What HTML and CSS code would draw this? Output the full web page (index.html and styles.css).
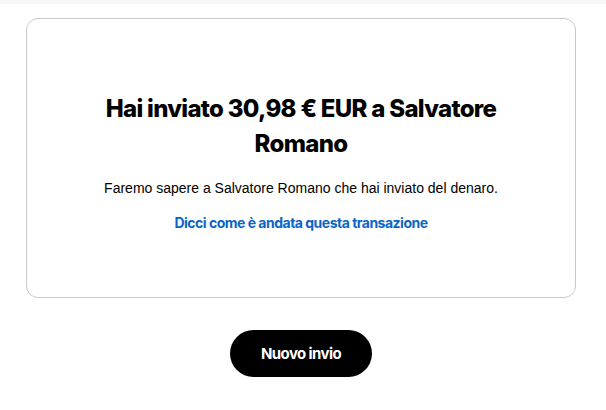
FILE: index.html
```html
<!DOCTYPE html>
<html lang="it">
<head>
  <meta charset="UTF-8" />
  <meta name="viewport" content="width=device-width, initial-scale=1" />
  <title>Invio completato</title>
  <link rel="stylesheet" href="styles.css">
</head>
<body>
  <div class="topbar"></div>

  <main class="page">
    <section class="card">
      <h1 class="title">Hai inviato 30,98&nbsp;€ EUR a Salvatore Romano</h1>
      <p class="note">Faremo sapere a Salvatore Romano che hai inviato del denaro.</p>
      <a class="feedback" href="#">Dicci come è andata questa transazione</a>
    </section>

    <div class="actions">
      <button class="btn-primary" type="button">Nuovo invio</button>
    </div>
  </main>
</body>
</html>
```

FILE: styles.css
```css
body {
  margin: 0;
  background: #fff;
  color: #000;
  font-family: "Liberation Sans", Arial, sans-serif;
}

.topbar {
  height: 4px;
  background: #f7f7f7;
}

.page {
  padding: 14px 30px 0 26px;
}

.card {
  height: 280px;
  box-sizing: border-box;
  border: 1px solid #c9c9c9;
  border-radius: 12px;
  display: flex;
  flex-direction: column;
  align-items: center;
  text-align: center;
  padding: 72px 60px 0;
}

.title {
  margin: 0 0 17px;
  font-family: Inter, "Noto Sans", sans-serif;
  font-weight: 800;
  font-size: 24px;
  line-height: 35px;
  letter-spacing: -0.7px;
  max-width: 400px;
}

.note {
  margin: 0 0 15px;
  font-size: 14px;
  line-height: 20px;
}

.feedback {
  display: block;
  font-family: Inter, "Noto Sans", sans-serif;
  font-weight: 700;
  font-size: 14px;
  line-height: 20px;
  letter-spacing: -0.5px;
  color: #0b65c8;
  text-decoration: none;
}

.actions {
  display: flex;
  justify-content: center;
  padding-top: 32px;
}

.btn-primary {
  width: 142px;
  height: 47px;
  border: 0;
  border-radius: 24px;
  background: #000;
  color: #fff;
  font-family: Inter, "Noto Sans", sans-serif;
  font-weight: 700;
  font-size: 15px;
  letter-spacing: -0.6px;
  cursor: pointer;
}
```
